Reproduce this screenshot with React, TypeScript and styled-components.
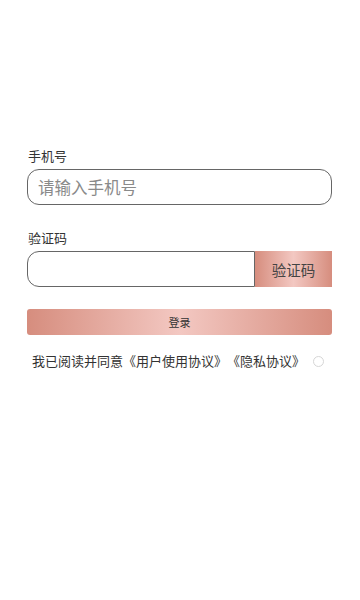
import styled, { createGlobalStyle } from "styled-components";

const GlobalStyle = createGlobalStyle`
  html, body {
    margin: 0;
    padding: 0;
    background: #fff;
    font-family: "Noto Sans CJK SC", "Noto Sans", sans-serif;
    text-spacing-trim: space-all;
  }
`;

const rose = "linear-gradient(to right, #d68d7e 0%, #f3c8c2 50%, #d68d7e 100%)";

export default function App() {
  return (
    <>
      <GlobalStyle />
      <Page>
        <Label>手机号</Label>
        <PhoneInput placeholder="请输入手机号" />
        <Label $top={24}>验证码</Label>
        <CodeRow>
          <CodeInput />
          <CodeButton>验证码</CodeButton>
        </CodeRow>
        <LoginButton>登录</LoginButton>
        <Agreement>
          <span>我已阅读并同意《用户使用协议》《隐私协议》</span>
          <Radio />
        </Agreement>
      </Page>
    </>
  );
}

const Page = styled.div`
  padding: 147px 28px 0 27px;
  display: flex;
  flex-direction: column;
`;

const Label = styled.div<{ $top?: number }>`
  margin-top: ${(p) => p.$top ?? 0}px;
  font-size: 13px;
  line-height: 18px;
  color: #333;
  padding-left: 1px;
`;

const PhoneInput = styled.input`
  margin-top: 4px;
  box-sizing: border-box;
  height: 36px;
  width: 100%;
  border: 1px solid #666;
  border-radius: 12px;
  padding: 0 10px;
  font-size: 16.5px;
  font-family: inherit;
  outline: none;
  &::placeholder {
    color: #8a8a8a;
  }
`;

const CodeRow = styled.div`
  margin-top: 4px;
  display: flex;
  height: 36px;
`;

const CodeInput = styled.input`
  flex: 1;
  box-sizing: border-box;
  height: 100%;
  border: 1px solid #666;
  border-radius: 12px 0 0 12px;
  padding: 0 10px;
  outline: none;
  font-family: inherit;
`;

const CodeButton = styled.div`
  width: 77px;
  height: 100%;
  display: flex;
  align-items: center;
  justify-content: center;
  background: ${rose};
  font-size: 14.5px;
  color: #444;
`;

const LoginButton = styled.div`
  margin-top: 22px;
  height: 26px;
  border-radius: 3px;
  background: ${rose};
  display: flex;
  align-items: center;
  justify-content: center;
  font-size: 11px;
  color: #333;
`;

const Agreement = styled.div`
  margin-top: 17px;
  padding-left: 5px;
  display: flex;
  align-items: center;
  gap: 8px;
  font-size: 13px;
  line-height: 18px;
  color: #333;
`;

const Radio = styled.span`
  width: 9px;
  height: 9px;
  border: 1px solid #d6d6d6;
  border-radius: 50%;
`;
